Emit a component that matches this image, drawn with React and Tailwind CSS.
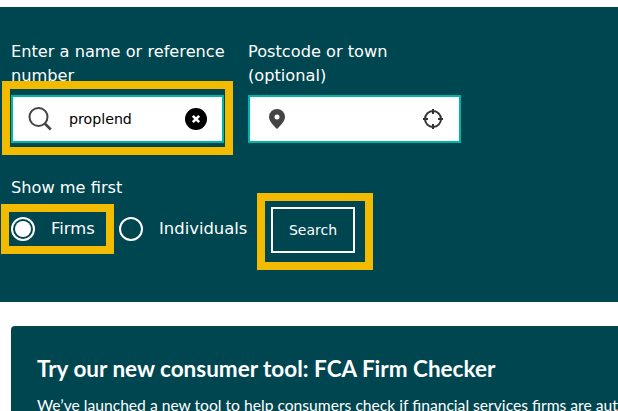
import { useState } from 'react';

function SearchIcon() {
  return (
    <svg width="24" height="24" viewBox="0 0 24 24" fill="none" stroke="#444" className="shrink-0">
      <circle cx="10.5" cy="10" r="9" strokeWidth="2" />
      <path d="M16.800 16.500l6 6" strokeWidth="2.600" />
    </svg>
  );
}

function ClearIcon() {
  return (
    <svg width="22" height="22" viewBox="0 0 22 22" className="shrink-0">
      <circle cx="11" cy="11" r="11" fill="#000" />
      <path d="M7.800 7.800l6.400 6.400M14.200 7.800l-6.400 6.400" stroke="#fff" strokeWidth="2.600" />
    </svg>
  );
}

function PinIcon() {
  return (
    <svg width="18" height="20" viewBox="0 0 18 20" className="shrink-0">
      <path
        fillRule="evenodd"
        fill="#444"
        d="M9 0a8 8 0 0 1 8 8c0 4-4.500 8.500-8 12C5.500 16.500 1 12 1 8a8 8 0 0 1 8-8zm0 5.500a2.500 2.500 0 1 0 0 5 2.500 2.500 0 0 0 0-5z"
      />
    </svg>
  );
}

function LocateIcon() {
  return (
    <svg width="20" height="20" viewBox="0 0 20 20" fill="none" stroke="#333" className="shrink-0">
      <circle cx="10" cy="10" r="8" strokeWidth="2" />
      <path d="M10 0v5M10 15v5M0 10h5M15 10h5" strokeWidth="2" />
    </svg>
  );
}

// yellow highlight drawn over the form
function Highlight({ className }) {
  return <div className={`absolute border-[8px] border-[#f3bb00] pointer-events-none ${className}`} />;
}

function Radio({ label, checked, onClick }) {
  return (
    <button type="button" onClick={onClick} className="flex items-center gap-4 text-[16.400px] text-white">
      <span className="flex h-6 w-6 items-center justify-center rounded-full border-2 border-white">
        {checked && <span className="h-4 w-4 rounded-full bg-white" />}
      </span>
      <span>{label}</span>
    </button>
  );
}

export default function App() {
  const [who, setWho] = useState('firms');

  return (
    <div className="h-[411px] w-[618px] overflow-hidden bg-white pt-[7px] font-['DejaVu_Sans',sans-serif] text-[16.200px] leading-6">
      <form className="bg-[#004650] pl-[11px] pt-[33px] pb-[49px] text-white">
        <div className="flex gap-6">
          <div className="w-[213px]">
            <label className="mb-[7px] block h-12 whitespace-nowrap">
              Enter a name or reference
              <br />
              number
            </label>
            <div className="relative">
              <div className="flex h-12 items-center border-2 border-[#00b5a7] bg-white pl-[15px] pr-[15px]">
                <SearchIcon />
                <input
                  readOnly
                  value="proplend"
                  className="ml-[17px] w-0 flex-1 text-[14.200px] text-black outline-none"
                />
                <ClearIcon />
              </div>
              <Highlight className="-top-[14px] -bottom-[12px] -left-[9px] -right-[9px]" />
            </div>
          </div>
          <div className="w-[213px]">
            <label className="mb-[7px] block h-12">Postcode or town (optional)</label>
            <div className="flex h-12 items-center justify-between border-2 border-[#00b5a7] bg-white pl-[18px] pr-[16px]">
              <PinIcon />
              <LocateIcon />
            </div>
          </div>
        </div>

        <p className="mt-[33px]">Show me first</p>

        <div className="mt-[7px] flex items-start">
          <div className="relative mt-[10px] w-[85px]">
            <Radio label="Firms" checked={who === 'firms'} onClick={() => setWho('firms')} />
            <Highlight className="-top-[13px] -bottom-[13px] -left-[10px] -right-[18px]" />
          </div>
          <div className="ml-[23px] mt-[10px] w-[128px]">
            <Radio label="Individuals" checked={who === 'individuals'} onClick={() => setWho('individuals')} />
          </div>
          <div className="relative ml-6">
            <button type="button" className="flex h-[46px] w-[84px] items-center justify-center border-2 border-white text-[14px] text-white">
              Search
            </button>
            <Highlight className="-top-[14px] -bottom-[17px] -left-[14px] -right-[18px]" />
          </div>
        </div>
      </form>

      <div className="ml-[11px] mt-6 rounded-tl bg-[#004650] pl-[26px] pt-[27px] font-['Lato',sans-serif] text-white">
        <h2 className="whitespace-nowrap text-[22.500px] font-bold leading-8">Try our new consumer tool: FCA Firm Checker</h2>
        <p className="mt-[8px] whitespace-nowrap text-[15.650px]">
          We’ve launched a new tool to help consumers check if financial services firms are authorised
        </p>
      </div>
    </div>
  );
}
